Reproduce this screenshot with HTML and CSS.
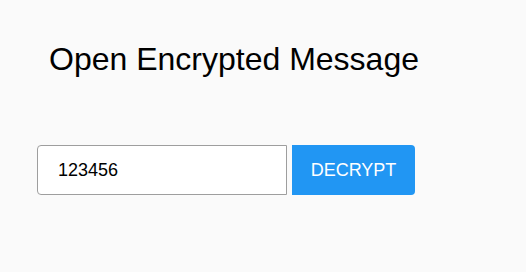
FILE: index.html
```html
<!DOCTYPE html>
<html>
<head>
<meta charset="utf-8">
<link rel="stylesheet" href="styles.css">
</head>
<body>
<main class="page">
  <h1 class="title">Open Encrypted Message</h1>
  <form class="decrypt-form">
    <input class="key-input" type="text" value="123456">
    <button class="decrypt-btn" type="button">DECRYPT</button>
  </form>
</main>
</body>
</html>
```
FILE: styles.css
```css
html, body {
  margin: 0;
  padding: 0;
  background: #fafafa;
}
body {
  font-family: "Liberation Sans", Arial, sans-serif;
  color: #000;
}
.page {
  padding: 41px 0 0 37px;
}
.title {
  margin: 0 0 0 12px;
  font-size: 32px;
  font-weight: normal;
  line-height: 37px;
}
.decrypt-form {
  display: flex;
  gap: 5px;
  margin-top: 67px;
}
.key-input {
  box-sizing: border-box;
  width: 250px;
  height: 50px;
  margin: 0;
  padding: 0 0 0 20px;
  border: 1px solid #9e9e9e;
  border-radius: 4px 0 0 4px;
  background: #fff;
  font-family: "Liberation Sans", Arial, sans-serif;
  font-size: 18px;
  color: #000;
  outline: none;
}
.decrypt-btn {
  box-sizing: border-box;
  width: 123px;
  height: 50px;
  margin: 0;
  padding: 0;
  border: none;
  border-radius: 0 4px 4px 0;
  background: #2196f3;
  color: #fff;
  font-family: "Liberation Sans", Arial, sans-serif;
  font-size: 18px;
}
```
